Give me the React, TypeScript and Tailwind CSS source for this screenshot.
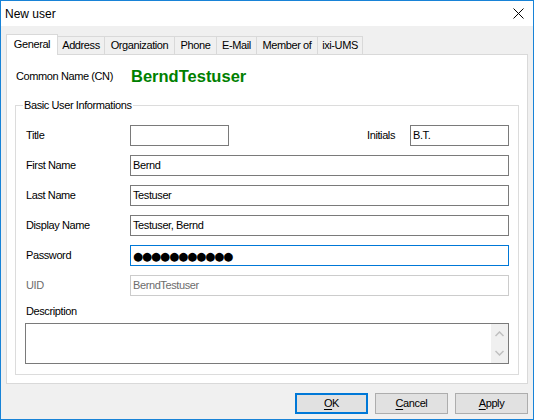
import React from 'react';

const tabs = [
  { label: 'Address', w: 'w-[47px]' },
  { label: 'Organization', w: 'w-[70px]' },
  { label: 'Phone', w: 'w-[42px]' },
  { label: 'E-Mail', w: 'w-[40px]' },
  { label: 'Member of', w: 'w-[61px]' },
  { label: 'ixi-UMS', w: 'w-[45px]' },
];

function Field({ value, className = '', tone = 'normal' }: { value?: string; className?: string; tone?: 'normal' | 'focus' | 'disabled' }) {
  const border =
    tone === 'focus' ? 'border-[#0078d7]' : tone === 'disabled' ? 'border-[#cccccc] text-[#6d6d6d]' : 'border-[#7a7a7a]';
  return (
    <div className={`h-[21px] border bg-white flex items-center pl-[2px] leading-[13px] ${border} ${className}`}>
      {value}
    </div>
  );
}

function Row({ label, children, disabled }: { label: string; children: React.ReactNode; disabled?: boolean }) {
  return (
    <div className="flex items-center h-[21px]">
      <div className={`w-[104px] ${disabled ? 'text-[#6d6d6d]' : ''}`}>{label}</div>
      {children}
    </div>
  );
}

function Button({ mnemonic, rest, primary }: { mnemonic: string; rest: string; primary?: boolean }) {
  return (
    <button
      className={`w-[73px] h-[21px] flex items-center justify-center bg-[#e1e1e1] ${
        primary ? 'border-2 border-[#0078d7]' : 'border border-[#adadad]'
      }`}
    >
      <span>
        <span className="underline underline-offset-2">{mnemonic}</span>
        {rest}
      </span>
    </button>
  );
}

export default function App() {
  return (
    <div className="w-[534px] h-[420px] border border-[#1883d7] bg-[#f0f0f0] flex flex-col font-['Liberation_Sans',Arial,sans-serif] text-[11px] tracking-[-0.4px] text-black overflow-hidden">
      {/* Title bar */}
      <div className="h-[25px] bg-white flex items-center justify-between pl-[4px] pr-[9px]">
        <span className="text-[12px] tracking-normal">New user</span>
        <svg width="11" height="11" viewBox="0 0 11 11" className="text-black">
          <path d="M0.5 0.5 L10.5 10.5 M10.5 0.5 L0.5 10.5" stroke="currentColor" strokeWidth="1" />
        </svg>
      </div>

      {/* Tabs */}
      <div className="flex items-end pl-[5px] pt-[8px]">
        <div className="relative z-10 -mb-px w-[52px] h-[21px] bg-white border border-b-0 border-[#d9d9d9] flex items-center justify-center pb-[2px]">
          General
        </div>
        {tabs.map((t) => (
          <div
            key={t.label}
            className={`${t.w} h-[18px] bg-[#f0f0f0] border-t border-r border-[#d9d9d9] flex items-center justify-center`}
          >
            {t.label}
          </div>
        ))}
      </div>

      {/* Tab panel */}
      <div className="mx-[5px] h-[330px] bg-white border border-[#d9d9d9] flex flex-col pt-[9px]">
        <div className="flex items-center h-[24px] pl-[9px]">
          <div className="w-[115px]">Common Name (CN)</div>
          <div className="text-[16.5px] tracking-normal font-bold text-[#008000]">BerndTestuser</div>
        </div>

        <fieldset className="mx-[8px] mt-[9px] mb-[8px] border border-[#dcdcdc] flex-1">
          <legend className="ml-[7px] px-[1px] leading-[16px]">Basic User Informations</legend>
          <div className="flex flex-col gap-[9px] pl-[10px] pr-[9px] mt-[12px]">
            <Row label="Title">
              <Field className="w-[99px]" />
              <div className="flex-1" />
              <div>Initials</div>
              <Field className="w-[99px] ml-[15px]" value="B.T." />
            </Row>
            <Row label="First Name">
              <Field className="flex-1" value="Bernd" />
            </Row>
            <Row label="Last Name">
              <Field className="flex-1" value="Testuser" />
            </Row>
            <Row label="Display Name">
              <Field className="flex-1" value="Testuser, Bernd" />
            </Row>
            <Row label="Password">
              <div className="flex-1 h-[21px] border border-[#0078d7] bg-white flex items-center pl-[2px]">
                <span className="font-['DejaVu_Sans',sans-serif] text-[11.5px] leading-[12px] tracking-[-1px]">
                  ●●●●●●●●●●●
                </span>
              </div>
            </Row>
            <Row label="UID" disabled>
              <Field className="flex-1" value="BerndTestuser" tone="disabled" />
            </Row>
          </div>

          <div className="pl-[10px] mt-[9px] h-[13px] leading-[13px]">Description</div>
          <div className="ml-[9px] mr-[9px] mt-[5px] mb-[10px] h-[41px] border border-[#7a7a7a] bg-white flex justify-end">
            <div className="w-[17px] bg-[#f0f0f0] flex flex-col items-center justify-between py-[7px]">
              <svg width="9" height="6" viewBox="0 0 9 6">
                <path d="M0.5 5 L4.5 1 L8.5 5" fill="none" stroke="#bfbfbf" strokeWidth="1.5" />
              </svg>
              <svg width="9" height="6" viewBox="0 0 9 6">
                <path d="M0.5 1 L4.5 5 L8.5 1" fill="none" stroke="#bfbfbf" strokeWidth="1.5" />
              </svg>
            </div>
          </div>
        </fieldset>
      </div>

      {/* Buttons */}
      <div className="flex justify-end gap-[7px] mt-[9px] mr-[5px]">
        <Button mnemonic="O" rest="K" primary />
        <Button mnemonic="C" rest="ancel" />
        <Button mnemonic="A" rest="pply" />
      </div>
    </div>
  );
}
